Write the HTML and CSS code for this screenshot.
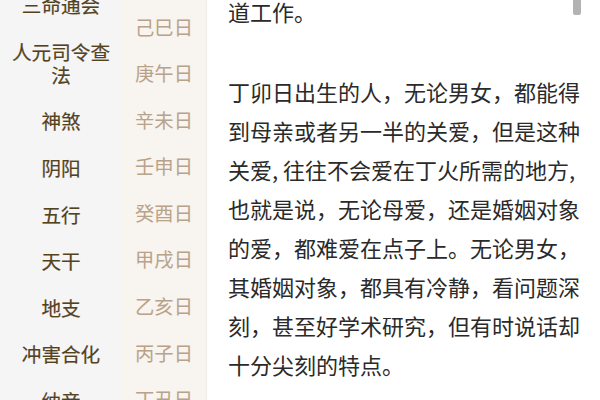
FILE: index.html
```html
<!DOCTYPE html>
<html lang="zh-CN">
<head>
<meta charset="utf-8">
<link rel="stylesheet" href="styles.css">
</head>
<body>
<div class="page">
  <nav class="cats">
    <ul class="cat-list">
      <li>三命通会</li>
      <li>人元司令查法</li>
      <li>神煞</li>
      <li>阴阳</li>
      <li>五行</li>
      <li>天干</li>
      <li>地支</li>
      <li>冲害合化</li>
      <li>纳音</li>
    </ul>
  </nav>
  <aside class="days">
    <ul class="day-list">
      <li>戊辰日</li>
      <li>己巳日</li>
      <li>庚午日</li>
      <li>辛未日</li>
      <li>壬申日</li>
      <li>癸酉日</li>
      <li>甲戌日</li>
      <li>乙亥日</li>
      <li>丙子日</li>
      <li>丁丑日</li>
    </ul>
  </aside>
  <main class="article">
    <p class="para first">道工作。</p>
    <p class="para">丁卯日出生的人，无论男女，都能得到母亲或者另一半的关爱，但是这种关爱, 往往不会爱在丁火所需的地方,也就是说，无论母爱，还是婚姻对象的爱，都难爱在点子上。无论男女，其婚姻对象，都具有冷静，看问题深刻，甚至好学术研究，但有时说话却十分尖刻的特点。</p>
    <div class="scroll-thumb"></div>
  </main>
</div>
</body>
</html>
```
FILE: styles.css
```css
html, body {
  margin: 0;
  padding: 0;
  width: 600px;
  height: 400px;
  overflow: hidden;
  background: #ffffff;
}
.page {
  display: flex;
  height: 400px;
  overflow: hidden;
  font-family: "Noto Sans CJK SC", "Noto Sans", sans-serif;
}
.cats {
  width: 122px;
  flex: none;
  background: #f5f5f5;
  overflow: hidden;
}
.cat-list, .day-list {
  list-style: none;
  margin: 0;
  padding: 0;
}
.cat-list {
  margin-top: -18.5px;
}
.cat-list li {
  padding: 11.8px 10px;
  line-height: 23px;
  font-size: 19.6px;
  font-weight: 400;
  -webkit-text-stroke: 0.2px #54421f;
  color: #54421f;
  text-align: center;
}
.days {
  width: 84px;
  flex: none;
  background: #f8f4ef;
  border-right: 1px solid #efece8;
  overflow: hidden;
}
.day-list {
  margin-top: -42.9px;
}
.day-list li {
  padding: 11.8px 0;
  line-height: 23px;
  font-size: 19.3px;
  color: #b9a28a;
  text-align: center;
}
.article {
  flex: 1;
  position: relative;
  padding-left: 21px;
  overflow: hidden;
}
.para {
  width: 356px;
  margin: 0 0 41.5px 0;
  font-size: 22px;
  line-height: 39px;
  color: #2a2a2a;
}
.para.first {
  margin-top: -8.5px;
}
.scroll-thumb {
  position: absolute;
  top: 0;
  right: 19px;
  width: 8px;
  height: 15px;
  background: #b3b3b3;
  border-radius: 0 0 2px 2px;
}
```
